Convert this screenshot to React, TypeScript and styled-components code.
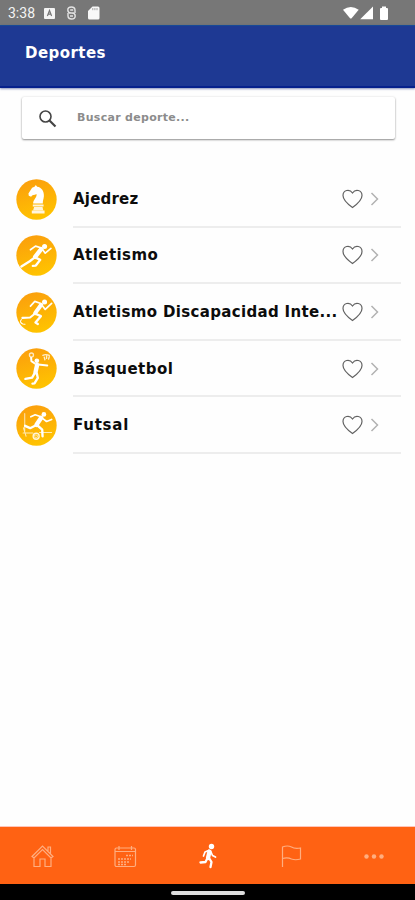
import React from 'react';
import styled, { createGlobalStyle } from 'styled-components';

const GlobalStyle = createGlobalStyle`
  * { box-sizing: border-box; }
  body { margin: 0; background: #fefefe; font-family: 'DejaVu Sans', 'Open Sans', sans-serif; }
`;

const Screen = styled.div`
  width: 415px;
  height: 900px;
  display: flex;
  flex-direction: column;
  overflow: hidden;
  background: #fefefe;
`;

const StatusBar = styled.div`
  height: 25px;
  flex: none;
  display: flex;
  align-items: center;
  padding: 1px 25px 0 8px;
  background: #777;
  color: #f4f4f4;
`;

const Clock = styled.span`
  width: 36px;
  font: 400 14px/24px Roboto, sans-serif;
`;

const StatusIcons = styled.div<{ $end?: boolean }>`
  display: flex;
  align-items: center;
  margin-left: ${(p) => (p.$end ? 'auto' : '0')};
`;

const Header = styled.header`
  height: 63px;
  flex: none;
  padding: 15px 25px 0;
  background: #1e3993;
  border-top: 1px solid #184a96;
  border-bottom: 2px solid #06218c;
  box-shadow: 0 1px 2px rgba(20, 40, 120, 0.5);
`;

const Title = styled.h1`
  margin: 0;
  color: #fff;
  font-size: 15px;
  line-height: 24px;
  font-weight: 700;
  letter-spacing: 0.45px;
`;

const SearchBox = styled.label`
  height: 42px;
  flex: none;
  margin: 9px 20px 0 22px;
  padding-left: 15px;
  display: flex;
  align-items: center;
  border-radius: 2px;
  background: #fff;
  box-shadow: 0 1px 2px rgba(0, 0, 0, 0.42), 0 0 3px rgba(0, 0, 0, 0.08);
`;

const SearchText = styled.span`
  margin-left: 18px;
  color: #8c8c8c;
  font-size: 11px;
  font-weight: 700;
  line-height: 20px;
  letter-spacing: 0.3px;
  white-space: nowrap;
`;

const List = styled.ul`
  flex: 1;
  margin: 0;
  padding: 32px 14px 0 16px;
  list-style: none;
`;

const Row = styled.li`
  height: 56.6px;
  display: flex;
`;

const Badge = styled.svg`
  width: 41px;
  height: 41px;
  flex: none;
  margin: 7.5px 16px 0 0;
`;

const RowBody = styled.div`
  flex: 1;
  min-width: 0;
  height: 56.6px;
  display: flex;
  align-items: center;
  padding-top: 1px;
  border-bottom: 2px solid #ededed;
`;

const Name = styled.span<{ $spacing: number }>`
  width: 269px;
  flex: none;
  color: #0c0c0c;
  font-size: 15px;
  line-height: 24px;
  font-weight: 700;
  letter-spacing: ${(p) => p.$spacing}px;
  white-space: nowrap;
`;

const Chevron = styled.svg`
  margin-left: 7px;
`;

const TabBar = styled.nav`
  height: 58px;
  flex: none;
  display: grid;
  grid-template-columns: repeat(5, 1fr);
  align-items: center;
  justify-items: center;
  background: #ff6213;
  border-top: 1px solid #ffc5ba;
`;

const TabIcon = styled.svg<{ $active?: boolean }>`
  width: 24px;
  height: 26px;
  color: ${(p) => (p.$active ? '#fff' : '#ffae80')};
`;

const GestureBar = styled.div`
  height: 16px;
  flex: none;
  display: flex;
  justify-content: center;
  padding-top: 7px;
  background: #000;
`;

const GestureHandle = styled.div`
  width: 74px;
  height: 4px;
  border-radius: 2px;
  background: #dedede;
`;

const line = { fill: 'none', stroke: '#fff', strokeLinecap: 'round', strokeLinejoin: 'round' } as const;

const Knight = () => (
  <g fill="#fff">
    <path d="M59 18l4 5c13 1 21 14 20 28-1 11-4 14-3 22H51c0-12 12-17 10-28-6 4-13 2-16 8l-7-3-1-7 11-17 7-3z" />
    <path d="M50 76h32v6H50zM54 83h25l2 10H51zM47 94h38v9H47z" fill="#fff5dc" />
  </g>
);

const Runner = () => (
  <g {...line}>
    <circle cx="85" cy="34" r="7.5" fill="#fff" stroke="none" />
    <path d="M75 42L57 65" strokeWidth="13" />
    <path d="M74 38L58 33 43 44M78 42l9 12 17-14" strokeWidth="5" />
    <path d="M56 66l16 8-13 17-9 1" strokeWidth="7" />
    <path d="M54 68L41 78 16 94" strokeWidth="7" />
  </g>
);

const Sprinter = () => (
  <g {...line}>
    <circle cx="85" cy="30" r="7.5" fill="#fff" stroke="none" />
    <path d="M75 38L57 63" strokeWidth="12" />
    <path d="M74 34L56 28 43 42M78 40l9 12 19-18" strokeWidth="5" />
    <path d="M56 64l18 8-16 19 7 4" strokeWidth="7" />
    <path d="M54 66L42 76 19 77" strokeWidth="6" />
    <path d="M16 82q-7 8 4 13l7 1" strokeWidth="3" />
  </g>
);

const Basketball = () => (
  <g {...line}>
    <circle cx="62" cy="38" r="7" fill="#fff" stroke="none" />
    <circle cx="46" cy="21" r="6" strokeWidth="4" opacity="0.75" />
    <path d="M63 50l-5 22" strokeWidth="13" />
    <path d="M56 46L46 39l-1-10M66 49l27 3" strokeWidth="6" />
    <path d="M56 74L48 88 28 92M62 76l3 13-10 16-6 1" strokeWidth="7" />
    <path d="M80 22q8-5 19 0M84 27l2 8M97 33l2-7M91 22v9" strokeWidth="4" opacity="0.8" />
  </g>
);

const Futsal = () => (
  <g {...line}>
    <circle cx="83" cy="28" r="7" fill="#fff" stroke="none" />
    <path d="M75 38L61 59" strokeWidth="13" />
    <path d="M72 34L57 29 44 35M78 39l13 10 15-6" strokeWidth="5" />
    <path d="M58 61L42 69 27 62M64 61l14 12 1 20" strokeWidth="7" />
    <path d="M26 25v52M21 83h29M70 82h36M22 68l8 25" strokeWidth="3" opacity="0.7" />
    <circle cx="60" cy="93" r="9" strokeWidth="4" opacity="0.85" />
    <path d="M56 89l7 1 1 6-6 2z" strokeWidth="2" opacity="0.85" />
  </g>
);

const sports = [
  { name: 'Ajedrez', spacing: 0.2, Icon: Knight },
  { name: 'Atletismo', spacing: 0.45, Icon: Runner },
  { name: 'Atletismo Discapacidad Inte...', spacing: 0.34, Icon: Sprinter },
  { name: 'Básquetbol', spacing: 0.5, Icon: Basketball },
  { name: 'Futsal', spacing: 0.75, Icon: Futsal },
];

export default function App() {
  return (
    <>
      <GlobalStyle />
      <Screen>
        <StatusBar>
          <Clock>3:38</Clock>
          <StatusIcons>
            <svg width="44" height="16" viewBox="0 0 44 16">
              <rect x="0" y="3" width="11" height="11" rx="1" fill="#f4f4f4" />
              <path d="M3.4 11l2.1-5.5L7.6 11M4 9.2h3" fill="none" stroke="#777" strokeWidth="1.2" />
              <path d="M31 4.500Q30.500 2 27.500 2 23.800 2 23.800 5t3.200 3h3M24 11.500q.5 2.500 3.500 2.500 3.700 0 3.700-3T28 8h-3M26.200 5h3M26 11h3M31 4.500V8M24 8v3.500" fill="none" stroke="#e4e4e4" strokeWidth="1.400" />
            </svg>
            <svg width="12" height="16" viewBox="0 0 12 16">
              <path d="M4.500 1.500H10q1.500 0 1.500 1.500v10q0 1.500-1.500 1.500H1.500Q0 14.500 0 13V6z" fill="#f8f8f8" />
              <path d="M4.800 3v2.200M6.900 3v2.200M9 3v2.200" stroke="#999" strokeWidth=".9" />
            </svg>
          </StatusIcons>
          <StatusIcons $end>
            <svg width="47" height="16" viewBox="0 0 47 16" fill="#fff">
              <path d="M0 4.800Q7.800-1 15.700 4.800L8.600 13.200q-.8.800-1.600 0z" />
              <path d="M30 1.500v12.700H17.200z" />
              <path d="M39 1.500h4V3h1q1 0 1 1v10q0 1-1 1h-6q-1 0-1-1V4q0-1 1-1h1z" />
            </svg>
          </StatusIcons>
        </StatusBar>
        <Header>
          <Title>Deportes</Title>
        </Header>
        <SearchBox>
          <svg width="22" height="22" viewBox="0 0 22 22" fill="none" stroke="#454545">
            <circle cx="8.500" cy="9.500" r="5.500" strokeWidth="1.600" />
            <path d="M12.500 13.500l6 6" strokeWidth="2.200" />
          </svg>
          <SearchText>Buscar deporte...</SearchText>
        </SearchBox>
        <List>
          {sports.map(({ name, spacing, Icon }) => (
            <Row key={name}>
              <Badge viewBox="0 0 122 122">
                <defs>
                  <linearGradient id="amber" x1="0.3" y1="0" x2="0.6" y2="1">
                    <stop offset="0" stopColor="#fb9f0d" />
                    <stop offset="1" stopColor="#ffc400" />
                  </linearGradient>
                </defs>
                <circle cx="61" cy="61" r="60" fill="url(#amber)" />
                <Icon />
              </Badge>
              <RowBody>
                <Name $spacing={spacing}>{name}</Name>
                <svg width="21" height="20" viewBox="0 0 21 20" fill="none" stroke="#626262" strokeWidth="1.200">
                  <path d="M10.500 18.500C7 16 1 11.500 1 6.500 1 1 7.500-.5 10.500 4 13.500-.5 20 1 20 6.500c0 5-6 9.500-9.500 12z" />
                </svg>
                <Chevron width="10" height="14" viewBox="0 0 10 14" fill="none" stroke="#b2b2b2" strokeWidth="1.500">
                  <path d="M1.500 1l6 6-6 6" />
                </Chevron>
              </RowBody>
            </Row>
          ))}
        </List>
        <TabBar>
          <TabIcon viewBox="0 0 24 26" fill="none" stroke="currentColor" strokeWidth="1.200">
            <path d="M2 13.500L12.500 3 23 13.500l-2 1.500-8.500-8.500L4 15zM4 14v9.500h6V16h5v7.500h6V14M18 8V4h2.500v6.500" />
          </TabIcon>
          <TabIcon viewBox="0 0 24 26" fill="none" stroke="currentColor" strokeWidth="1.200">
            <rect x="2" y="5" width="20.500" height="18.500" rx="1.500" />
            <path d="M2 8.500h20.500M6 3v4M18.500 3v4" />
            <path d="M13 12.500h7M5 16h13M5 19h11M5 21.500h9" strokeWidth="1.700" strokeDasharray="2 1" />
          </TabIcon>
          <TabIcon $active viewBox="0 0 24 26" fill="none" stroke="currentColor" strokeLinecap="round" strokeLinejoin="round">
            <circle cx="15.500" cy="3.500" r="2.700" fill="currentColor" stroke="none" />
            <path d="M13.500 8.500L12 15" strokeWidth="4.300" />
            <path d="M12.500 7.500L9 9l-1.500 4M15 9l1.500 3.500 3 1.500" strokeWidth="1.700" />
            <path d="M11.500 15l-2 4-5 .5M13 15l2.500 4-1 5" strokeWidth="2.300" />
          </TabIcon>
          <TabIcon viewBox="0 0 24 26" fill="none" stroke="currentColor" strokeWidth="1.200">
            <path d="M3.500 24V4q5-2 9 0 3 2 9 1v11q-5 1.500-9 0-4-2-9-.5" />
          </TabIcon>
          <TabIcon viewBox="0 0 24 26" fill="currentColor">
            <circle cx="4.500" cy="13.500" r="2.200" />
            <circle cx="12" cy="13.500" r="2.200" />
            <circle cx="19.500" cy="13.500" r="2.200" />
          </TabIcon>
        </TabBar>
        <GestureBar>
          <GestureHandle />
        </GestureBar>
      </Screen>
    </>
  );
}
